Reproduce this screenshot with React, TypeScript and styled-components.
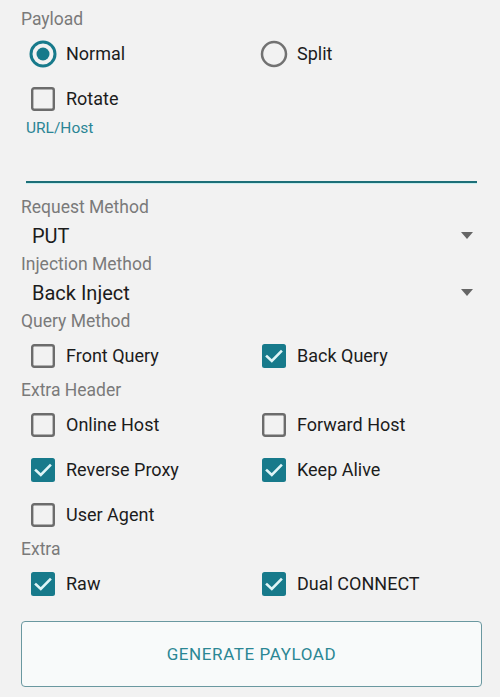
import styled, { createGlobalStyle } from 'styled-components';

const TEAL = '#177a8b';

const GlobalStyle = createGlobalStyle`
  html, body {
    margin: 0;
    padding: 0;
    background: #f2f2f2;
  }
  body {
    font-family: Roboto, "Noto Sans", "Liberation Sans", sans-serif;
  }
`;

type Option = { label: string; checked: boolean };

const Radio = ({ checked }: { checked: boolean }) => (
  <svg width="28" height="28" viewBox="0 0 28 28">
    <circle
      cx="14"
      cy="14"
      r="12"
      fill="none"
      stroke={checked ? TEAL : '#727272'}
      strokeWidth={checked ? 3 : 2.5}
    />
    {checked && <circle cx="14" cy="14" r="6.5" fill={TEAL} />}
  </svg>
);

const Check = ({ checked }: { checked: boolean }) => (
  <svg width="28" height="28" viewBox="0 0 28 28">
    {checked ? (
      <>
        <rect x="2" y="2" width="24" height="24" rx="2.5" fill={TEAL} />
        <path
          d="M7 14.5 L11.8 19 L21 9.5"
          fill="none"
          stroke="#dff5f7"
          strokeWidth="2.6"
          strokeLinecap="square"
        />
      </>
    ) : (
      <rect
        x="3.2"
        y="3.2"
        width="21.6"
        height="21.6"
        rx="2"
        fill="none"
        stroke="#6c6c6c"
        strokeWidth="2.4"
      />
    )}
  </svg>
);

const Arrow = () => (
  <svg width="12" height="7" viewBox="0 0 12 7">
    <path d="M0 0 L12 0 L6 7 Z" fill="#666" />
  </svg>
);

const Choice = ({ option, kind }: { option: Option; kind: 'radio' | 'check' }) => (
  <Item>
    <Slot>{kind === 'radio' ? <Radio checked={option.checked} /> : <Check checked={option.checked} />}</Slot>
    <ItemText>{option.label}</ItemText>
  </Item>
);

const ChoiceRow = ({ items, kind = 'check' }: { items: Option[]; kind?: 'radio' | 'check' }) => (
  <Row>
    {items.map((o) => (
      <Choice key={o.label} option={o} kind={kind} />
    ))}
  </Row>
);

const Select = ({ value }: { value: string }) => (
  <SelectBox>
    <SelectValue>{value}</SelectValue>
    <Arrow />
  </SelectBox>
);

const App = (): JSX.Element => (
  <Page>
    <GlobalStyle />
    <SectionLabel>Payload</SectionLabel>
    <ChoiceRow
      kind="radio"
      items={[
        { label: 'Normal', checked: true },
        { label: 'Split', checked: false },
      ]}
    />
    <ChoiceRow items={[{ label: 'Rotate', checked: false }]} />
    <HintLabel>URL/Host</HintLabel>
    <TextInput />

    <SectionLabel>Request Method</SectionLabel>
    <Select value="PUT" />
    <SectionLabel>Injection Method</SectionLabel>
    <Select value="Back Inject" />

    <SectionLabel>Query Method</SectionLabel>
    <ChoiceRow
      items={[
        { label: 'Front Query', checked: false },
        { label: 'Back Query', checked: true },
      ]}
    />

    <SectionLabel>Extra Header</SectionLabel>
    <ChoiceRow
      items={[
        { label: 'Online Host', checked: false },
        { label: 'Forward Host', checked: false },
      ]}
    />
    <ChoiceRow
      items={[
        { label: 'Reverse Proxy', checked: true },
        { label: 'Keep Alive', checked: true },
      ]}
    />
    <ChoiceRow items={[{ label: 'User Agent', checked: false }]} />

    <SectionLabel>Extra</SectionLabel>
    <ChoiceRow
      items={[
        { label: 'Raw', checked: true },
        { label: 'Dual CONNECT', checked: true },
      ]}
    />

    <GenerateButton>GENERATE PAYLOAD</GenerateButton>
  </Page>
);

export default App;

const Page = styled.main`
  display: flex;
  flex-direction: column;
  padding: 7px 18px 10px 21px;
  min-height: 697px;
  box-sizing: border-box;
  background: #f2f2f2;
`;

const SectionLabel = styled.div`
  height: 24px;
  line-height: 24px;
  font-size: 17.5px;
  color: #7a7a7a;
`;

const Row = styled.div`
  display: grid;
  grid-template-columns: 231px 231px;
  height: 45px;
  padding-left: 8px;
  align-items: center;
`;

const Item = styled.label`
  display: flex;
  align-items: center;
  gap: 9px;
`;

const Slot = styled.span`
  display: flex;
  width: 28px;
  height: 28px;
`;

const ItemText = styled.span`
  font-size: 18px;
  color: #1c1c1c;
`;

const HintLabel = styled.div`
  height: 14px;
  line-height: 14px;
  margin-left: 5px;
  font-size: 15.5px;
  color: #2a8595;
`;

const TextInput = styled.div`
  height: 46px;
  margin: 0 5px 12px;
  border-bottom: 2.5px solid #1d6f78;
  box-shadow: 0 1px 0 #c9eeee;
`;

const SelectBox = styled.div`
  display: flex;
  align-items: center;
  justify-content: space-between;
  height: 33px;
  padding: 0 9px 0 11px;
`;

const SelectValue = styled.span`
  font-size: 20px;
  color: #1c1c1c;
`;

const GenerateButton = styled.button`
  margin-top: 15px;
  height: 66px;
  width: 461px;
  border: 1.5px solid #6a98a0;
  border-radius: 4px;
  background: #f8fafa;
  font-family: inherit;
  font-size: 17px;
  color: #2b8794;
  letter-spacing: 0.6px;
`;
